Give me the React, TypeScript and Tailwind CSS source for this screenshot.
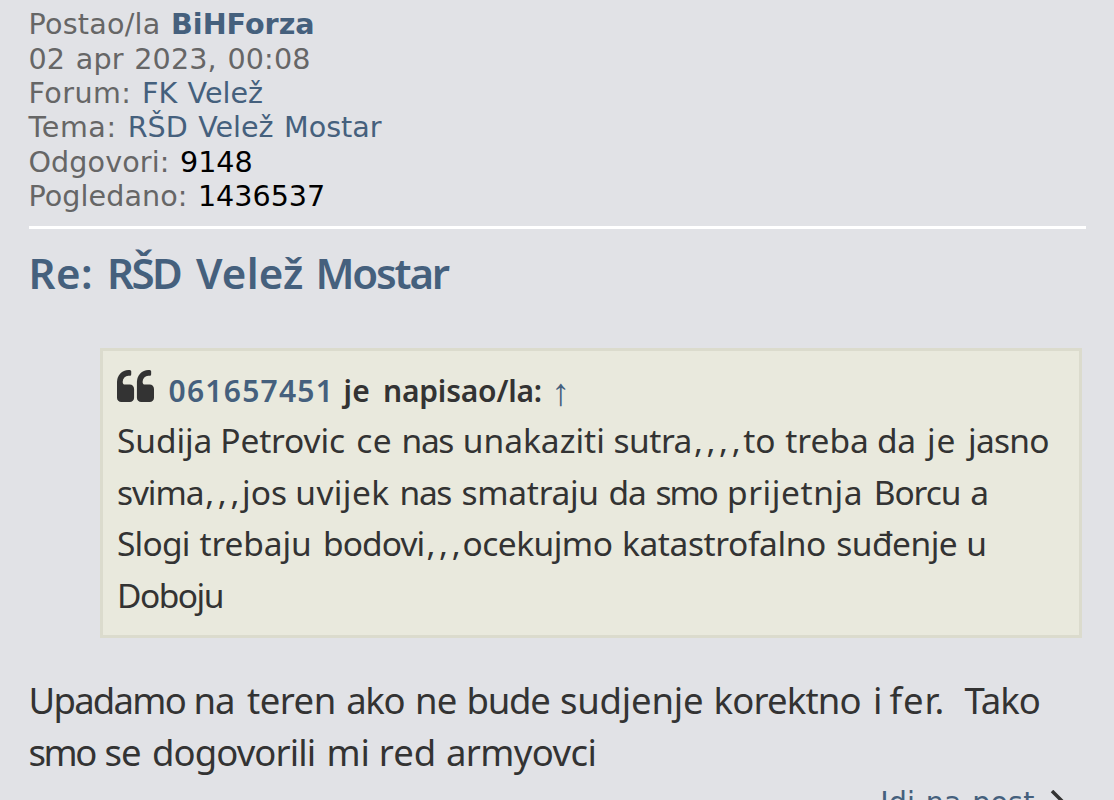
import { ReactNode } from "react";

interface TextProps {
  className?: string;
  children: ReactNode;
}

function Line({ className = "", children }: TextProps) {
  return <span className={`block whitespace-nowrap ${className}`}>{children}</span>;
}

function Row({ className = "", children }: TextProps) {
  return <div className={`flex whitespace-pre ${className}`}>{children}</div>;
}

// One word with its own advance width and tracking
function W({ className = "", children }: TextProps) {
  return <span className={`shrink-0 ${className}`}>{children}{" "}</span>;
}

const QUOTE_MARK =
  "M768 832v384q0 80-56 136t-136 56H192q-80 0-136-56T0 1216V512q0-104 40.5-198.500t109.500-163.500 163.500-109.500T512 0h64q26 0 45 19t19 45v128q0 26-19 45t-45 19h-64q-106 0-181 75t-75 181v32q0 40 28 68t68 28h224q80 0 136 56t56 136z";

function QuoteIcon() {
  return (
    <svg viewBox="0 0 1664 1408" className="mt-[4.5px] h-[32px] w-[37px] shrink-0" preserveAspectRatio="none" fill="currentColor">
      <path d={QUOTE_MARK} />
      <path transform="translate(896 0)" d={QUOTE_MARK} />
    </svg>
  );
}

function PostInfo() {
  return (
    <div className="h-[221.6px] border-b-[3px] border-white font-['DejaVu_Sans',sans-serif] text-[28.6px] leading-[34.3px] [word-spacing:1.3px] text-[#666]">
      <Line>
        <span className="tracking-[0.22px]">Postao/la </span>
        <a className="font-bold text-[#45607d]">BiHForza</a>
      </Line>
      <Line className="tracking-[0.16px]">02 apr 2023, 00:08</Line>
      <Line>
        <span className="tracking-[0.4px]">Forum: </span>
        <a className="text-[#45607d]">FK Velež</a>
      </Line>
      <Line>
        <span className="tracking-[0.6px]">Tema: </span>
        <a className="text-[#45607d]">RŠD Velež Mostar</a>
      </Line>
      <Line>
        <span className="tracking-[0.1px]">Odgovori: </span>
        <span className="text-black">9148</span>
      </Line>
      <Line>
        <span className="tracking-[0.06px]">Pogledano: </span>
        <span className="text-black">1436537</span>
      </Line>
    </div>
  );
}

function Quote() {
  return (
    <blockquote className="mt-[49.5px] ml-[71.5px] h-[290px] w-[982px] border-[3px] border-[#dbdbcd] bg-[#e9e9dd] px-[14px] pt-[14.5px] font-['Noto_Sans',sans-serif] text-[33.5px] leading-[51.4px]">
      <Row className="h-[50px] text-[30px] font-semibold">
        <QuoteIcon />
        <a className="ml-[14.5px] w-[175px] tracking-[1.25px] text-[#45607d]">061657451</a>
        <W className="w-[39.5px] tracking-[0.3px]">je</W>
        <W className="w-[168px] tracking-[-0.2px]">napisao/la:</W>
        <a className="mt-[2px] h-[40px] font-['Liberation_Sans',sans-serif] text-[38px] font-normal text-[#45607d]">↑</a>
      </Row>
      <Row>
        <W className="w-[103.3px] tracking-[-0.1px]">Sudija</W>
        <W className="w-[135.9px] tracking-[-0.15px]">Petrovic</W>
        <W className="w-[45.4px] tracking-[0.6px]">ce</W>
        <W className="w-[61.2px] tracking-[-1.4px]">nas</W>
        <W className="w-[150.8px]">unakaziti</W>
        <W className="w-[80.4px] tracking-[-0.5px]">sutra</W>
        <span className="w-[49.3px] tracking-[3.6px]">,,,,</span>
        <W className="w-[42px]">to</W>
        <W className="w-[91.8px]">treba</W>
        <W className="w-[49.9px] tracking-[-0.5px]">da</W>
        <W className="w-[41px] tracking-[0.9px]">je</W>
        <W className="tracking-[-0.7px]">jasno</W>
      </Row>
      <Row>
        <W className="w-[88.3px] tracking-[-1.1px]">svima</W>
        <span className="w-[36.7px] tracking-[3.6px]">,,,</span>
        <W className="w-[53.3px]">jos</W>
        <W className="w-[104.3px] tracking-[0.4px]">uvijek</W>
        <W className="w-[62px] tracking-[-1.4px]">nas</W>
        <W className="w-[146.8px] tracking-[-0.3px]">smatraju</W>
        <W className="w-[47.2px] tracking-[-0.9px]">da</W>
        <W className="w-[71.4px] tracking-[-2.2px]">smo</W>
        <W className="w-[146.8px] tracking-[0.6px]">prijetnja</W>
        <W className="w-[96.6px] tracking-[-1.1px]">Borcu</W>
        <W>a</W>
      </Row>
      <Row>
        <W className="w-[82.5px] tracking-[-0.8px]">Slogi</W>
        <W className="w-[123.5px] tracking-[-0.1px]">trebaju</W>
        <W className="w-[103.5px] tracking-[-0.9px]">bodovi</W>
        <span className="w-[35.9px] tracking-[3.6px]">,,,</span>
        <W className="w-[159.6px] tracking-[-0.5px]">ocekujmo</W>
        <W className="w-[214.2px] tracking-[-0.4px]">katastrofalno</W>
        <W className="w-[130px] tracking-[-0.5px]">suđenje</W>
        <W>u</W>
      </Row>
      <Row>
        <W className="tracking-[-1.5px]">Doboju</W>
      </Row>
    </blockquote>
  );
}

export default function App() {
  return (
    <div className="h-[800px] overflow-hidden bg-[#e1e2e6] px-[28.5px] pt-[7.4px] text-[#333]">
      <PostInfo />

      <h3 className="mt-[19.5px] flex h-[50px] font-['Noto_Sans',sans-serif] text-[42px] leading-[50px] font-semibold whitespace-pre text-[#45607d]">
        <W className="w-[78.5px] tracking-[0.4px]">Re:</W>
        <W className="w-[89px] tracking-[-2.5px]">RŠD</W>
        <W className="w-[119.5px] tracking-[0.2px]">Velež</W>
        <W className="tracking-[-2.2px]">Mostar</W>
      </h3>

      <Quote />

      <div className="mt-[37.3px] font-['Noto_Sans',sans-serif] text-[36.5px] leading-[51.4px]">
        <Row>
          <W className="w-[165px] tracking-[-1.75px]">Upadamo</W>
          <W className="w-[53.5px] tracking-[-1px]">na</W>
          <W className="w-[99.3px] tracking-[-0.5px]">teren</W>
          <W className="w-[68.7px] tracking-[-1.4px]">ako</W>
          <W className="w-[51.6px] tracking-[-0.9px]">ne</W>
          <W className="w-[93.4px] tracking-[-1.3px]">bude</W>
          <W className="w-[153.5px] tracking-[-0.2px]">sudjenje</W>
          <W className="w-[159.5px] tracking-[-0.8px]">korektno</W>
          <W className="w-[16.5px]">i</W>
          <W className="w-[75px] tracking-[0.9px]">fer.</W>
          <W className="tracking-[-1px]">Tako</W>
        </Row>
        <Row>
          <W className="w-[76px] tracking-[-2.4px]">smo</W>
          <W className="w-[47.5px] tracking-[-1px]">se</W>
          <W className="w-[174.4px] tracking-[-0.9px]">dogovorili</W>
          <W className="w-[52.4px]">mi</W>
          <W className="w-[67.2px]">red</W>
          <W className="tracking-[-0.6px]">armyovci</W>
        </Row>
      </div>

      <div className="mt-[7px] flex items-start justify-end pr-[22px] font-['DejaVu_Sans',sans-serif] text-[28.6px] leading-[34px] [word-spacing:1.3px] text-[#45607d]">
        <a className="tracking-[0.15px] whitespace-nowrap">Idi na post</a>
        <svg viewBox="0 0 14 22" className="mt-[5px] ml-[15px] h-[22px] w-[14px] text-[#333]" fill="none" stroke="currentColor" strokeWidth="3.5">
          <path d="M2 1l10 10L2 21" />
        </svg>
      </div>
    </div>
  );
}
